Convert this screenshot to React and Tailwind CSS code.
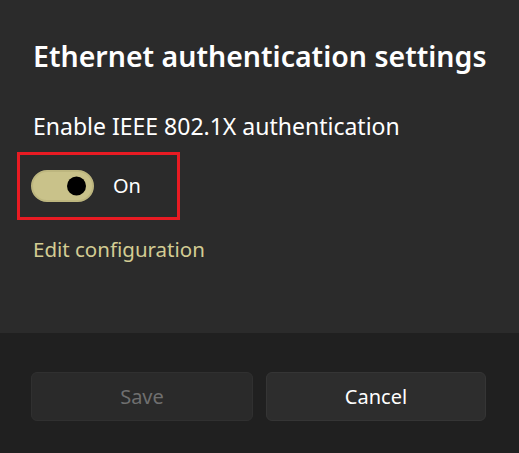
import React, { useState } from 'react';

const Toggle = ({ on, onChange }) => (
  <button
    onClick={() => onChange(!on)}
    className={`relative w-[63px] h-[32px] rounded-full border-2 ${on ? 'bg-[#c9c28a] border-[#bdb67f]' : 'bg-transparent border-[#9a9a9a]'}`}
  >
    <span
      className={`absolute top-1/2 -translate-y-1/2 w-[19px] h-[19px] rounded-full ${on ? 'right-[6px] bg-black' : 'left-[6px] bg-[#cfcfcf]'}`}
    />
  </button>
);

const App = () => {
  const [enabled, setEnabled] = useState(true);

  return (
    <div className="w-[519px] h-[453px] flex flex-col font-['Noto_Sans','Open_Sans',sans-serif] text-white">
      <div className="h-[333px] bg-[#2b2b2b] pl-[33px] pt-[36px]">
        <h1 className="text-[28.5px] font-semibold leading-[40px]">Ethernet authentication settings</h1>
        <p className="mt-[36px] text-[23px] leading-[28px]">Enable IEEE 802.1X authentication</p>
        <div className="mt-[12px] -ml-[16px] w-[163px] h-[68px] border-[3px] border-[#e81b23] flex items-center pl-[11px] gap-[19px]">
          <Toggle on={enabled} onChange={setEnabled} />
          <span className="text-[20px]">{enabled ? 'On' : 'Off'}</span>
        </div>
        <a className="block mt-[15px] text-[20.5px] leading-[28px] text-[#d3cc93] cursor-pointer">Edit configuration</a>
      </div>
      <div className="flex-1 bg-[#202020] pl-[31px] pr-[33px] pt-[39px] flex gap-[13px]">
        <button disabled className="w-[222px] h-[49px] rounded-[6px] bg-[#2a2a2a] border border-[#303030] text-[20px] text-[#6f6f6f]">Save</button>
        <button className="w-[220px] h-[49px] rounded-[6px] bg-[#2d2d2d] border border-[#353535] text-[20px] text-white">Cancel</button>
      </div>
    </div>
  );
};

export default App;
